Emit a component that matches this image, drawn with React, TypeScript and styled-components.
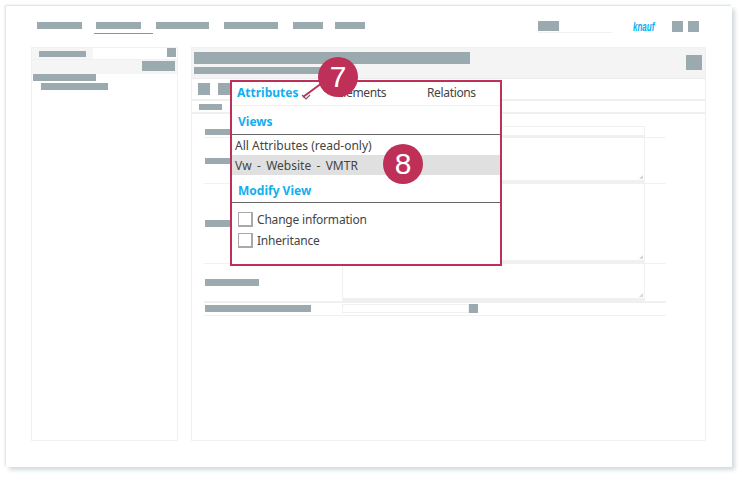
import styled, {createGlobalStyle} from 'styled-components';

const GlobalStyle = createGlobalStyle`
  html, body {
    margin: 0;
    padding: 0;
    background: #fff;
  }
  body {
    font-family: 'Noto Sans', 'DejaVu Sans', sans-serif;
  }
`;

const crimson = '#bf3058';
const blue = '#12aef0';
const slate = '#9baaaf';
const line = '#f0f0f0';

const Page = styled.div`
  position: relative;
  width: 741px;
  height: 477px;
  overflow: hidden;
  padding: 6px 0 0 6px;
  box-sizing: border-box;
`;

const Frame = styled.div`
  width: 726px;
  height: 461px;
  box-sizing: border-box;
  background: #fff;
  padding: 15px 26px 26px 25px;
  display: flex;
  flex-direction: column;
  box-shadow: -1px -1px 2px #d5dde0, 3px 3px 4px #d3dbde;
`;

const Bar = styled.div<{$w: number; $h?: number}>`
  width: ${({$w}) => $w}px;
  height: ${({$h}) => $h ?? 7}px;
  flex: none;
  background: ${slate};
`;

const NavBar = styled.div`
  display: flex;
  align-items: flex-start;
  height: 26px;
  flex: none;
`;

const NavItem = styled.div<{$gap: number}>`
  margin-left: ${({$gap}) => $gap}px;
  padding-top: 1px;
  position: relative;
`;

const NavUnderline = styled.div`
  position: absolute;
  left: -2px;
  top: 12px;
  width: 59px;
  height: 1px;
  background: #29b6f0;
`;

const NavRight = styled.div`
  margin-left: auto;
  margin-right: 7px;
  display: flex;
  align-items: flex-start;
`;

const SearchBox = styled.div`
  width: 74px;
  height: 11px;
  border-bottom: 1px solid ${line};
  display: flex;
`;

const Logo = styled.span`
  width: 20px;
  margin-left: 21px;
  margin-right: 19px;
  height: 12px;
  color: #00aeef;
  font: italic bold 10px/12px 'Liberation Sans', sans-serif;
  white-space: nowrap;
  transform-origin: left center;
  transform: scale(0.8, 1.35);
`;

const NavIcon = styled.div<{$gap?: number}>`
  width: 11px;
  height: 11px;
  background: ${slate};
  margin-left: ${({$gap}) => $gap ?? 0}px;
`;

const Columns = styled.div`
  flex: 1;
  display: flex;
  gap: 13px;
  min-height: 0;
`;

const Panel = styled.section<{$w: number}>`
  width: ${({$w}) => $w}px;
  flex: none;
  box-sizing: border-box;
  border: 1px solid ${line};
  display: flex;
  flex-direction: column;
`;

const TabStrip = styled.div`
  height: 12px;
  box-sizing: border-box;
  display: flex;
  align-items: flex-start;
  border-bottom: 1px solid ${line};
  flex: none;
`;

const TabLabel = styled.div`
  width: 61px;
  height: 11px;
  box-sizing: border-box;
  padding: 3px 0 0 5px;
  background: #f5f5f5;
  border-left: 2px solid #f5f5f5;
`;

const TabSquare = styled.div`
  width: 9px;
  height: 9px;
  margin-left: auto;
  margin-right: 1px;
  background: ${slate};
`;

const FilterRow = styled.div`
  height: 14px;
  background: #f5f5f5;
  display: flex;
  justify-content: flex-end;
  padding: 1px 2px 0 0;
  flex: none;
  box-sizing: border-box;
`;

const TreeItem = styled.div<{$indent: number}>`
  padding-left: ${({$indent}) => $indent}px;
  margin-bottom: 2px;
`;

const PanelHead = styled.header`
  height: 31px;
  flex: none;
  background: #f4f4f4;
  display: flex;
  box-sizing: border-box;
  padding: 4px 3px 0 2px;
  border-bottom: 1px solid #ececec;
`;

const HeadTitles = styled.div`
  display: flex;
  flex-direction: column;
  gap: 3px;
`;

const HeadButton = styled.div`
  width: 16px;
  height: 15px;
  margin-left: auto;
  margin-top: 3px;
  background: ${slate};
`;

const Toolbar = styled.div`
  height: 22px;
  flex: none;
  display: flex;
  gap: 8px;
  box-sizing: border-box;
  padding: 4px 0 0 6px;
  border-bottom: 2px solid ${line};
`;

const ToolButton = styled.div`
  width: 12px;
  height: 12px;
  background: ${slate};
`;

const SubBar = styled.div`
  height: 13px;
  flex: none;
  box-sizing: border-box;
  padding: 3px 0 0 7px;
  border-bottom: 2px solid ${line};
`;

const Form = styled.div`
  margin: 12px 39px 0 12px;
  display: flex;
  flex-direction: column;
`;

const FormRow = styled.div<{$h: number; $heavy?: boolean}>`
  height: ${({$h}) => $h}px;
  display: grid;
  grid-template-columns: 138px 303px;
  border-bottom: ${({$heavy}) => ($heavy ? 2 : 1)}px solid ${line};
  box-sizing: border-box;
`;

const LabelCell = styled.div<{$top: number}>`
  padding: ${({$top}) => $top}px 0 0 1px;
`;

const InputBox = styled.div`
  height: 11px;
  border: 1px solid ${line};
  border-bottom-width: 2px;
  box-sizing: border-box;
`;

const AreaBox = styled.div`
  position: relative;
  border: 1px solid ${line};
  border-top: 0;
  border-bottom: 3px solid ${line};
  box-sizing: border-box;
  height: 100%;
  &::after {
    content: '';
    position: absolute;
    right: 1px;
    bottom: 1px;
    border-left: 4px solid transparent;
    border-bottom: 4px solid #d6d6d6;
  }
`;

const LookupCell = styled.div`
  display: flex;
  align-items: flex-start;
  padding-top: 1px;
`;

const LookupInput = styled.div`
  width: 127px;
  height: 9px;
  border: 1px solid ${line};
  box-sizing: border-box;
`;

const LookupButton = styled.div`
  width: 9px;
  height: 9px;
  background: ${slate};
`;

/* annotated popup lying over the form */
const Popup = styled.div`
  position: absolute;
  left: 230px;
  top: 80px;
  width: 272px;
  height: 186px;
  box-sizing: border-box;
  border: 2px solid ${crimson};
  background: #fff;
  display: flex;
  flex-direction: column;
  color: #444;
  font-size: 12px;
  line-height: 16px;
`;

const PopupTabs = styled.div`
  height: 24px;
  flex: none;
  position: relative;
  display: grid;
  grid-template-columns: 100px 90px 1fr;
  align-items: center;
  padding: 0 0 2px 5px;
  box-sizing: border-box;
  border-bottom: 1px solid #f2f2f2;
`;

const PopupTab = styled.span<{$active?: boolean}>`
  font-weight: ${({$active}) => ($active ? 700 : 400)};
  color: ${({$active}) => ($active ? blue : '#444')};
  letter-spacing: ${({$active}) => ($active ? 0 : -0.35)}px;
`;

const Chevron = styled.svg`
  position: absolute;
  left: 69px;
  top: 12px;
`;

const SectionTitle = styled.div<{$h: number}>`
  height: ${({$h}) => $h}px;
  flex: none;
  box-sizing: border-box;
  padding: 8px 0 0 6px;
  color: ${blue};
  font-weight: 700;
  border-bottom: 1px solid #666;
`;

const ViewRow = styled.div<{$selected?: boolean}>`
  height: 20px;
  padding-left: 3px;
  line-height: 22px;
  flex: none;
  word-spacing: ${({$selected}) => ($selected ? 2.2 : 0)}px;
  background: ${({$selected}) => ($selected ? '#e0e0e0' : 'transparent')};
`;

const CheckRow = styled.label`
  height: 21px;
  display: flex;
  align-items: center;
  gap: 4px;
  padding-left: 6px;
  flex: none;
  letter-spacing: -0.2px;
`;

const CheckList = styled.div`
  padding-top: 6px;
`;

const CheckSquare = styled.span`
  width: 15px;
  height: 15px;
  box-sizing: border-box;
  border: 1px solid #a9a9a9;
  border-bottom-width: 2px;
  border-right-width: 2px;
  background: #fff;
`;

const Badge = styled.div<{$x: number; $y: number}>`
  position: absolute;
  left: ${({$x}) => $x}px;
  top: ${({$y}) => $y}px;
  width: 40px;
  height: 40px;
  border-radius: 50%;
  background: ${crimson};
  color: #fff;
  font: 30px/40px 'Liberation Sans', sans-serif;
  text-align: center;
`;

const Leader = styled.svg`
  position: absolute;
  left: 300px;
  top: 82px;
`;

const App = () => {
  return (
    <>
      <GlobalStyle />
      <Page>
        <Frame>
          <NavBar>
            <NavItem $gap={6}><Bar $w={45} /></NavItem>
            <NavItem $gap={14}><Bar $w={45} /><NavUnderline /></NavItem>
            <NavItem $gap={15}><Bar $w={53} /></NavItem>
            <NavItem $gap={15}><Bar $w={54} /></NavItem>
            <NavItem $gap={15}><Bar $w={30} /></NavItem>
            <NavItem $gap={12}><Bar $w={30} /></NavItem>
            <NavRight>
              <SearchBox><Bar $w={21} $h={10} /></SearchBox>
              <Logo>knauf</Logo>
              <NavIcon />
              <NavIcon $gap={5} />
            </NavRight>
          </NavBar>
          <Columns>
            <Panel $w={147}>
              <TabStrip>
                <TabLabel><Bar $w={47} $h={6} /></TabLabel>
                <TabSquare />
              </TabStrip>
              <FilterRow><Bar $w={33} $h={10} /></FilterRow>
              <TreeItem $indent={1}><Bar $w={63} /></TreeItem>
              <TreeItem $indent={9}><Bar $w={67} /></TreeItem>
            </Panel>
            <Panel $w={515}>
              <PanelHead>
                <HeadTitles>
                  <Bar $w={276} $h={12} />
                  <Bar $w={140} $h={7} />
                </HeadTitles>
                <HeadButton />
              </PanelHead>
              <Toolbar>
                <ToolButton />
                <ToolButton />
              </Toolbar>
              <SubBar><Bar $w={23} $h={6} /></SubBar>
              <Form>
                <FormRow $h={12}>
                  <LabelCell $top={3}><Bar $w={36} $h={6} /></LabelCell>
                  <InputBox />
                </FormRow>
                <FormRow $h={46}>
                  <LabelCell $top={20}><Bar $w={36} $h={6} /></LabelCell>
                  <AreaBox />
                </FormRow>
                <FormRow $h={80}>
                  <LabelCell $top={36}><Bar $w={36} /></LabelCell>
                  <AreaBox />
                </FormRow>
                <FormRow $h={39} $heavy>
                  <LabelCell $top={15}><Bar $w={54} /></LabelCell>
                  <AreaBox />
                </FormRow>
                <FormRow $h={13}>
                  <LabelCell $top={2}><Bar $w={106} /></LabelCell>
                  <LookupCell>
                    <LookupInput />
                    <LookupButton />
                  </LookupCell>
                </FormRow>
              </Form>
            </Panel>
          </Columns>
        </Frame>

        <Popup>
          <PopupTabs>
            <PopupTab $active>Attributes</PopupTab>
            <PopupTab>Elements</PopupTab>
            <PopupTab>Relations</PopupTab>
            <Chevron width="10" height="6" viewBox="0 0 10 6">
              <path d="M1 1l4 4 4-4" fill="none" stroke="#666" strokeWidth="1.2" />
            </Chevron>
          </PopupTabs>
          <SectionTitle $h={29}>Views</SectionTitle>
          <ViewRow>All Attributes (read-only)</ViewRow>
          <ViewRow $selected>Vw - Website - VMTR</ViewRow>
          <SectionTitle $h={28}>Modify View</SectionTitle>
          <CheckList>
            <CheckRow><CheckSquare />Change information</CheckRow>
            <CheckRow><CheckSquare />Inheritance</CheckRow>
          </CheckList>
        </Popup>

        <Leader width="24" height="18" viewBox="0 0 24 18">
          <path d="M22 1L3 15" fill="none" stroke={crimson} strokeWidth="2" />
        </Leader>
        <Badge $x={318} $y={57}>7</Badge>
        <Badge $x={383} $y={144}>8</Badge>
      </Page>
    </>
  );
};

export default App;
